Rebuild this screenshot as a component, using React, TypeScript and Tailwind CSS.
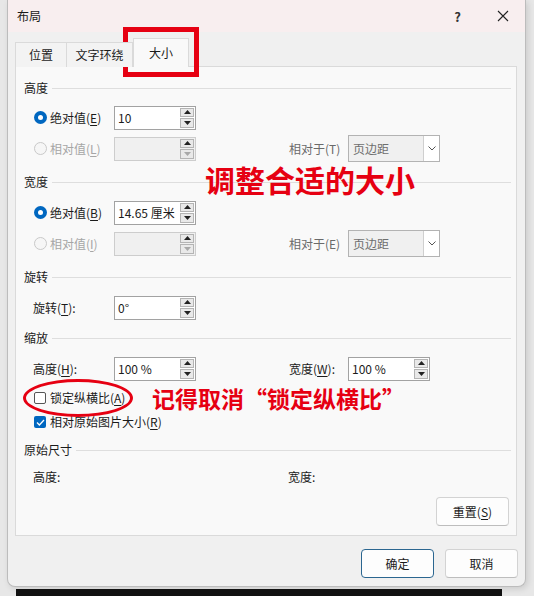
import React from "react";

const U = ({ c }: { c: string }) => (
  <span className="underline underline-offset-[2px]">{c}</span>
);

function Arrow({ up, dim }: { up?: boolean; dim?: boolean }) {
  return (
    <svg width="7" height="4" viewBox="0 0 7 4">
      <polygon
        points={up ? "0,4 3.5,0 7,4" : "0,0 3.5,4 7,0"}
        fill={dim ? "#a8a8a8" : "#222"}
      />
    </svg>
  );
}

function Spin({ value, disabled, w = "w-[82px]" }: { value?: string; disabled?: boolean; w?: string }) {
  return (
    <div
      className={`flex h-[24px] ${w} border ${
        disabled ? "border-[#cdcdcd] bg-[#f0f0f0]" : "border-[#a2a2a2] bg-white"
      }`}
    >
      <div className="flex-1 flex items-center pl-[3px]">{value}</div>
      <div className="flex flex-col w-[16px] p-[1px] gap-[1px]">
        <div className="flex-1 flex items-center justify-center bg-[#e9e9e9] border border-[#b4b4b4]">
          <Arrow up />
        </div>
        <div className="flex-1 flex items-center justify-center bg-[#e9e9e9] border border-[#b4b4b4]">
          <Arrow dim={disabled} />
        </div>
      </div>
    </div>
  );
}

function Select({ value }: { value: string }) {
  return (
    <div className="flex h-[27px] w-[92px] border border-[#b3b3b3] bg-[#f0f0f0]">
      <div className="flex-1 flex items-center pl-[4px] text-[#6e6e6e]">{value}</div>
      <div className="w-[16px] bg-white border-l border-[#cfcfcf] flex items-center justify-center">
        <svg width="8" height="5" viewBox="0 0 8 5">
          <path d="M0.5 0.5 L4 4 L7.5 0.5" fill="none" stroke="#555" strokeWidth="1" />
        </svg>
      </div>
    </div>
  );
}

function Radio({ checked, disabled }: { checked?: boolean; disabled?: boolean }) {
  if (checked)
    return (
      <span className="w-[13px] h-[13px] rounded-full bg-[#0067c0] flex items-center justify-center">
        <span className="w-[5px] h-[5px] rounded-full bg-white" />
      </span>
    );
  return (
    <span
      className={`w-[13px] h-[13px] rounded-full border ${
        disabled ? "border-[#c9c9c9] bg-[#f6f6f6]" : "border-[#555]"
      }`}
    />
  );
}

function Header({ title, className = "" }: { title: string; className?: string }) {
  return (
    <div className={`flex items-center h-[22px] pl-[8px] pr-[5px] gap-[4px] ${className}`}>
      <span>{title}</span>
      <div className="flex-1 h-px bg-[#dedede]" />
    </div>
  );
}

function RadioRow({
  label,
  acc,
  checked,
  value,
  right,
}: {
  label: string;
  acc: string;
  checked?: boolean;
  value?: string;
  right?: string;
}) {
  const disabled = !checked;
  return (
    <div className="flex items-center h-[31px] pl-[18px]">
      <div className={`flex items-center gap-[3px] w-[80px] ${disabled ? "text-[#a6a6a6]" : ""}`}>
        <Radio checked={checked} disabled={disabled} />
        <span>
          {label}(<U c={acc} />)
        </span>
      </div>
      <Spin value={value} disabled={disabled} />
      {right && (
        <>
          <span className="ml-[93px] w-[59px] text-[#6a6a6a]">{right}</span>
          <Select value="页边距" />
        </>
      )}
    </div>
  );
}

function Btn({ children, primary }: { children: React.ReactNode; primary?: boolean }) {
  return (
    <div
      className={`w-[73px] h-[29px] flex items-center justify-center rounded-[4px] bg-[#fdfdfd] border ${
        primary ? "border-[#2b6690]" : "border-[#d3d3d3] border-b-[#bdbdbd]"
      }`}
    >
      {children}
    </div>
  );
}

export default function App() {
  return (
    <div className="relative w-[534px] h-[596px] overflow-hidden bg-[#e7e7e7] text-[12px] leading-none text-[#1b1b1b] font-['Noto_Sans_CJK_SC',sans-serif]">
      <div className="ml-[7px] w-[519px] h-[587px] flex flex-col bg-[#f0f0f0] border-x border-b border-[#bcbcbc] rounded-b-[8px] shadow-[2px_2px_6px_rgba(0,0,0,0.12)] overflow-hidden">
        {/* title bar */}
        <div className="h-[32px] shrink-0 flex items-center bg-[#f8eeef] pl-[9px] pr-[16px]">
          <span>布局</span>
          <span className="ml-auto mr-[36px] text-[13px] font-bold text-[#333]">?</span>
          <svg width="12" height="12" viewBox="0 0 12 12">
            <path d="M1 1 L11 11 M11 1 L1 11" stroke="#222" strokeWidth="1.1" />
          </svg>
        </div>

        {/* tabs */}
        <div className="mt-[6px] h-[29px] flex items-end pl-[7px] relative z-10 -mb-px">
          <div className="w-[52px] h-[25px] flex items-center justify-center bg-[#f3f3f3] border border-[#dadada] border-b-0">
            位置
          </div>
          <div className="w-[66px] h-[25px] flex items-center justify-center bg-[#f3f3f3] border-t border-r border-[#dadada]">
            文字环绕
          </div>
          <div className="w-[56px] h-[29px] flex items-center justify-center bg-[#f9f9f9] border border-[#dadada] border-b-0">
            大小
          </div>
        </div>

        {/* panel */}
        <div className="ml-[7px] w-[502px] h-[470px] shrink-0 flex flex-col bg-[#f9f9f9] border border-[#dadada]">
          <Header title="高度" className="mt-[10px]" />
          <div className="mt-[3px]">
            <RadioRow label="绝对值" acc="E" checked value="10" />
            <RadioRow label="相对值" acc="L" right="相对于(T)" />
          </div>

          <Header title="宽度" className="mt-[7px]" />
          <div className="mt-[4px]">
            <RadioRow label="绝对值" acc="B" checked value="14.65 厘米" />
            <RadioRow label="相对值" acc="I" right="相对于(E)" />
          </div>

          <Header title="旋转" className="mt-[7px]" />
          <div className="mt-[4px] flex items-center h-[31px] pl-[17px]">
            <span className="w-[81px]">
              旋转(<U c="T" />):
            </span>
            <Spin value="0°" />
          </div>

          <Header title="缩放" className="mt-[4px]" />
          <div className="mt-[4px] flex items-center h-[31px] pl-[17px]">
            <span className="w-[81px]">
              高度(<U c="H" />):
            </span>
            <Spin value="100 %" />
            <span className="ml-[93px] w-[59px]">
              宽度(<U c="W" />):
            </span>
            <Spin value="100 %" />
          </div>
          <div className="mt-[2px] h-[24px] flex items-center pl-[18px] gap-[4px]">
            <span className="w-[12px] h-[12px] rounded-[2px] border border-[#555] bg-white" />
            <span>
              锁定纵横比(<U c="A" />)
            </span>
          </div>
          <div className="h-[24px] flex items-center pl-[18px] gap-[4px]">
            <span className="w-[12px] h-[12px] rounded-[2px] bg-[#0067c0] flex items-center justify-center">
              <svg width="9" height="7" viewBox="0 0 9 7">
                <path d="M1 3.5 L3.4 6 L8 1" fill="none" stroke="#fff" strokeWidth="1.3" />
              </svg>
            </span>
            <span>
              相对原始图片大小(<U c="R" />)
            </span>
          </div>

          <Header title="原始尺寸" className="mt-[5px]" />
          <div className="mt-[4px] h-[24px] flex items-center pl-[17px]">
            <span className="w-[255px]">高度:</span>
            <span>宽度:</span>
          </div>
          <div className="mt-[8px] flex justify-end pr-[7px]">
            <Btn>
              重置(<U c="S" />)
            </Btn>
          </div>
        </div>

        {/* buttons */}
        <div className="mt-[13px] flex justify-end gap-[11px] pr-[7px]">
          <Btn primary>确定</Btn>
          <Btn>取消</Btn>
        </div>
      </div>
      <div className="mt-[2px] ml-[16px] w-[486px] h-[7px] bg-[#111]" />

      {/* annotations */}
      <div className="absolute left-[123px] top-[27px] w-[76px] h-[50px] border-[5px] border-[#e60012]" />
      <div className="absolute left-[23px] top-[379px] w-[110px] h-[38px] rounded-[50%] border-[3px] border-[#e60012]" />
      <div className="absolute left-[205px] top-[164px] text-[30px] font-bold text-[#e60012] whitespace-nowrap">
        调整合适的大小
      </div>
      <div className="absolute left-[152px] top-[387px] text-[23px] font-bold text-[#e60012] whitespace-nowrap">
        记得取消“锁定纵横比”
      </div>
    </div>
  );
}
